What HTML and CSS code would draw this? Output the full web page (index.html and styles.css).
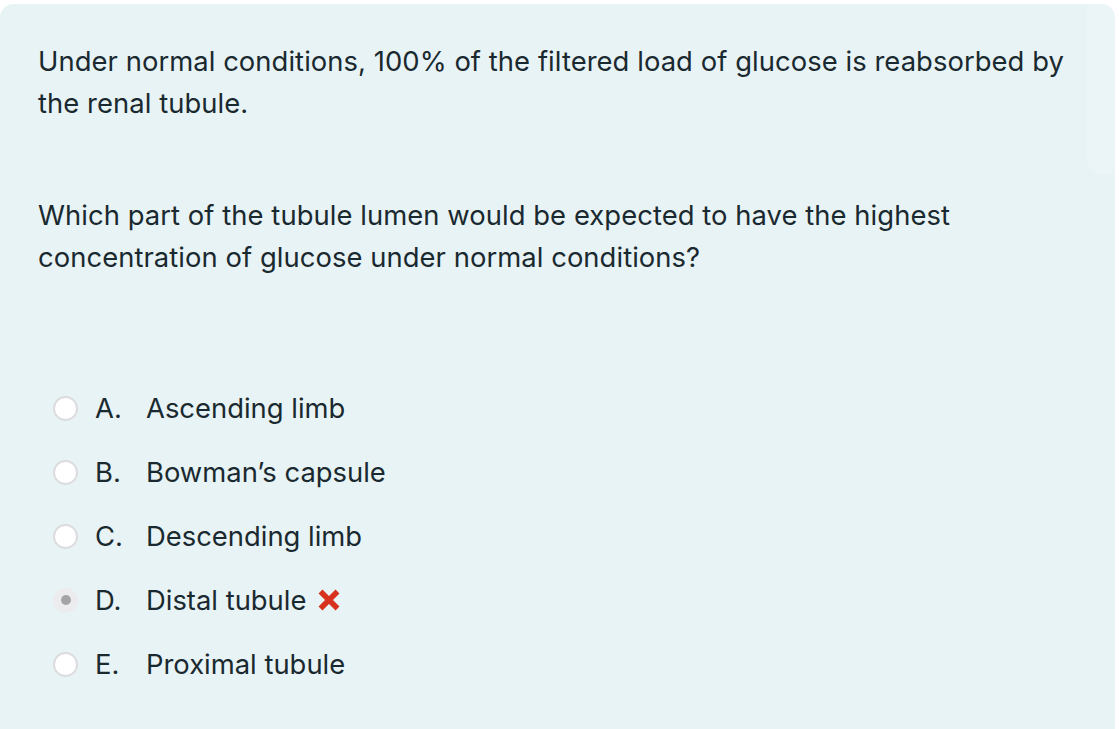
FILE: index.html
```html
<!DOCTYPE html>
<html lang="en">
<head>
<meta charset="utf-8">
<title>Question</title>
<link rel="stylesheet" href="styles.css">
</head>
<body>
<div class="card">
  <div class="corner-panel"></div>
  <p class="stem">Under normal conditions, 100% of the filtered load of glucose is reabsorbed by the renal tubule.</p>
  <p class="stem q">Which part of the tubule lumen would be expected to have the highest concentration of glucose under normal conditions?</p>
  <ul class="options">
    <li class="opt"><span class="radio"></span><span class="letter">A.</span><span class="label">Ascending limb</span></li>
    <li class="opt"><span class="radio"></span><span class="letter">B.</span><span class="label">Bowman’s capsule</span></li>
    <li class="opt"><span class="radio"></span><span class="letter">C.</span><span class="label">Descending limb</span></li>
    <li class="opt"><span class="radio selected"><span class="dot"></span></span><span class="letter">D.</span><span class="label">Distal tubule</span>
      <svg class="wrong" width="24" height="24" viewBox="0 0 24 24"><path d="M3.5 3.5 L20.5 20.5 M20.5 3.5 L3.5 20.5" stroke="#d8321f" stroke-width="5.5" stroke-linecap="butt" fill="none"/></svg>
    </li>
    <li class="opt"><span class="radio"></span><span class="letter">E.</span><span class="label">Proximal tubule</span></li>
  </ul>
</div>
</body>
</html>
```
FILE: styles.css
```css
html, body {
  margin: 0;
  padding: 0;
  background: #ffffff;
}
body {
  font-family: Inter, "Noto Sans", "Liberation Sans", sans-serif;
  color: #1a292f;
  overflow: hidden;
  height: 729px;
}
.card {
  position: relative;
  margin-top: 4px;
  width: 1115px;
  height: 760px;
  background: #e7f3f5;
  border-radius: 14px;
  padding: 37px 0 0 38px;
  box-sizing: border-box;
}
.corner-panel {
  position: absolute;
  top: 0;
  right: 0;
  width: 28px;
  height: 170px;
  background: #ebf5f7;
  border-top-right-radius: 14px;
  border-bottom-left-radius: 16px;
}
.stem {
  margin: 0;
  font-size: 27.4px;
  line-height: 41.5px;
  letter-spacing: 0.06px;
  max-width: 1045px;
  position: relative;
}
.stem.q {
  margin-top: 71px;
}
.options {
  list-style: none;
  margin: 98px 0 0 0;
  padding: 0 0 0 15px;
}
.opt {
  display: flex;
  align-items: center;
  height: 64px;
  font-size: 27.4px;
}
.radio {
  width: 21px;
  height: 21px;
  border: 2px solid #dcdcdf;
  border-radius: 50%;
  background: #ffffff;
  display: flex;
  align-items: center;
  justify-content: center;
  flex: none;
}
.radio.selected {
  background: #ececef;
  border-color: #ececef;
}
.dot {
  width: 10px;
  height: 10px;
  border-radius: 50%;
  background: #a3a3a8;
}
.letter {
  margin-left: 17px;
  width: 51px;
}
.wrong {
  margin-left: 11px;
}
```
